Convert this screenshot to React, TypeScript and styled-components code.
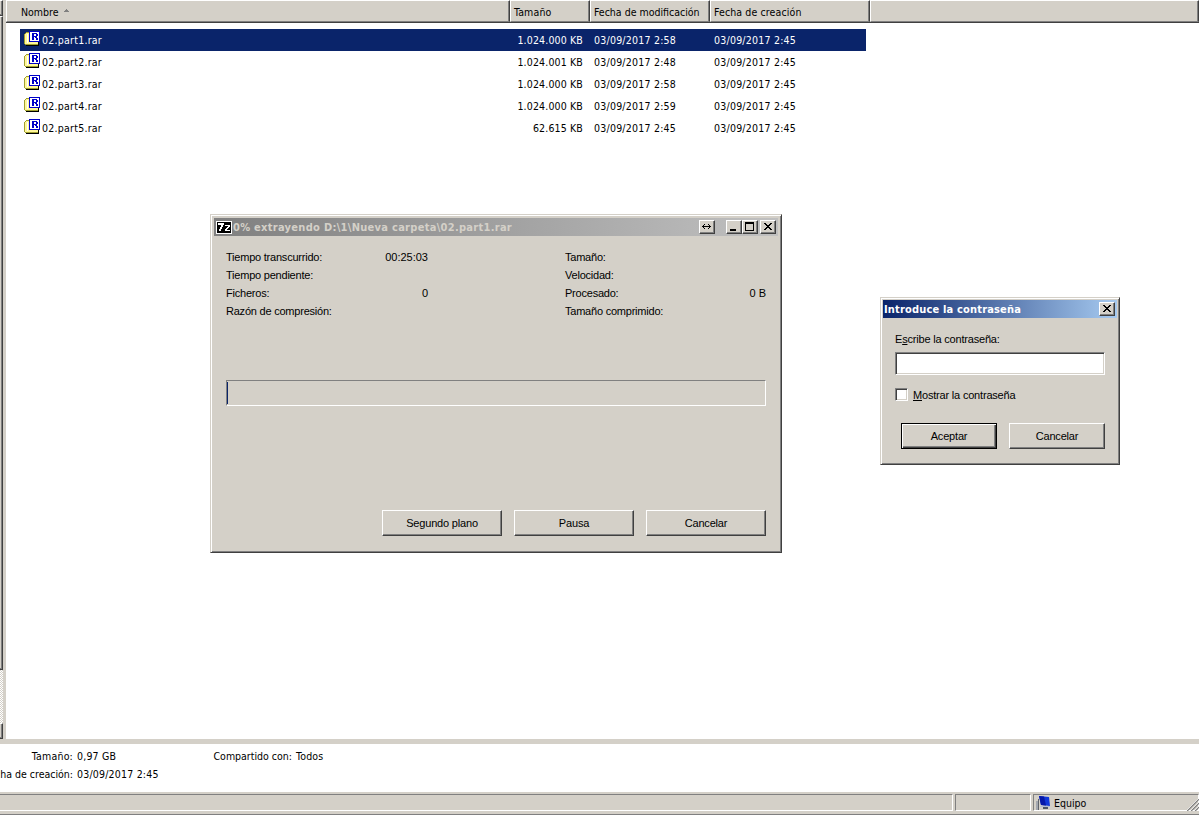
import React from 'react';
import styled, { createGlobalStyle, css } from 'styled-components';

const face = '#d4d0c8';
const tahoma = "'DejaVu Sans Condensed', 'DejaVu Sans', sans-serif";
const msSans = "'Liberation Sans', Arial, sans-serif";

const Global = createGlobalStyle`
  * { box-sizing: border-box; }
  body { margin: 0; background: #fff; }
  button, input { font: inherit; color: inherit; padding: 0; margin: 0; border-radius: 0; appearance: none; outline: none; }
`;

const Screen = styled.div`
  width: 1199px; height: 815px; overflow: hidden; position: relative;
  display: flex; flex-direction: column; background: #fff; color: #000;
  font: 10.5px/14px ${tahoma}; white-space: pre; cursor: default;
`;
const Explorer = styled.div`display: flex; height: 739px; flex: none;`;
const TreeEdge = styled.div`
  width: 6px; flex: none; display: flex; flex-direction: column; background: ${face};
`;
const ScrollPiece = styled.div<{ $h: number }>`
  width: 3px; height: ${p => p.$h}px; flex: none;
  border-top: 1px solid #fff; border-right: 1px solid #404040; border-bottom: 1px solid #404040;
  box-shadow: inset -1px -1px #808080;
`;
const ScrollTrack = styled.div`
  width: 3px; flex: 1; background: repeating-conic-gradient(#fff 0 25%, ${face} 0 50%) 0 0 / 2px 2px;
`;
const List = styled.div`flex: 1; min-width: 0;`;
const Header = styled.div`
  height: 23px; display: flex; background: ${face};
  border-bottom: 1px solid #404040; margin-bottom: 6px;
`;
const HeaderCell = styled.div<{ $w?: number; $pad?: number; $ls?: number }>`
  ${p => (p.$w ? css`width: ${p.$w}px;` : css`flex: 1;`)}
  display: flex; align-items: center; gap: 5px; padding: 1px 0 0 ${p => p.$pad ?? 3}px;
  letter-spacing: ${p => p.$ls ?? 0}px;
  border-top: 1px solid #fff; border-left: 1px solid #fff; border-right: 1px solid #404040; border-bottom: 1px solid #808080;
  box-shadow: inset -1px 0 #808080;
`;
const SortArrow = styled.svg`display: block; margin-top: -3px;`;
const Row = styled.div<{ $sel?: boolean }>`
  width: 846px; height: 22px; margin-left: 14px; padding: 0 0 1px 4px; display: flex; align-items: center;
  background: ${p => (p.$sel ? '#0a246a' : 'transparent')}; color: ${p => (p.$sel ? '#fff' : '#000')};
`;
const FileName = styled.div`display: flex; align-items: center; gap: 2px; width: 466px; letter-spacing: 0.25px;`;
const FileIcon = styled.svg`display: block; margin-top: -1px;`;
const Size = styled.div`width: 93px; text-align: right; letter-spacing: 0.15px;`;
const DateCell = styled.div`width: 120px; padding-left: 11px; flex: none; letter-spacing: 0.23px;`;

const Divider = styled.div`height: 5px; flex: none; background: ${face};`;
const Details = styled.div`
  height: 48px; flex: none; padding-top: 3px; display: grid; line-height: 18px; align-content: start;
  grid-template-columns: 73px 136px 83px 100px; grid-auto-rows: 18px;
`;
const Key = styled.div<{ $ls?: number }>`display: flex; justify-content: flex-end; letter-spacing: ${p => p.$ls ?? 0}px;`;
const Val = styled.div`padding-left: 4px; letter-spacing: 0.2px;`;

const StatusBar = styled.div`
  height: 23px; flex: none; display: flex; gap: 2px; background: ${face}; padding: 2px 0 3px; border-bottom: 1px solid #808080;
`;
const StatusPane = styled.div<{ $w?: number; $open?: boolean }>`
  ${p => (p.$w ? css`width: ${p.$w}px;` : css`flex: 1;`)}
  display: flex; align-items: center; gap: 2px; padding: 1px 0 0 2px; position: relative;
  border: 1px solid; border-color: #808080 #fff #fff #808080;
  ${p => p.$open && css`border-left: 0;`}
`;
const Grip = styled.svg`position: absolute; right: -1px; bottom: -1px;`;

const Window = styled.section<{ $x: number; $y: number; $w: number; $h: number; $frame: number }>`
  position: absolute; left: ${p => p.$x}px; top: ${p => p.$y}px; width: ${p => p.$w}px; height: ${p => p.$h}px;
  padding: ${p => p.$frame - 1}px; background: ${face};
  border: 1px solid; border-color: ${face} #404040 #404040 ${face};
  box-shadow: inset 1px 1px #fff, inset -1px -1px #808080;
  font: 11px/18px ${msSans};
`;
const TitleBar = styled.header<{ $active?: boolean }>`
  height: 18px; display: flex; align-items: center; padding: 0 2px 0 ${p => (p.$active ? 1 : 2)}px;
  font: bold 11px/18px ${tahoma};
  background: ${p => (p.$active ? 'linear-gradient(90deg, #0a246a, #a6caf0)' : 'linear-gradient(90deg, #808080, #c0c0c0)')};
  color: ${p => (p.$active ? '#fff' : face)};
`;
const Title = styled.span<{ $ls: number }>`flex: 1; padding-top: 1px; letter-spacing: ${p => p.$ls}px;`;
const CaptionButton = styled.button<{ $gap?: number }>`
  width: 16px; height: 14px; margin-left: ${p => p.$gap ?? 0}px; background: ${face};
  border: 1px solid; border-color: #fff #404040 #404040 #fff; box-shadow: inset -1px -1px #808080;
  & > svg { display: block; }
`;
const Stats = styled.div`display: flex; padding: 12px 12px 0; height: 144px;`;
const StatColumn = styled.dl<{ $w: number; $gap?: number }>`margin: 0 ${p => p.$gap ?? 0}px 0 0; width: ${p => p.$w}px;`;
const Stat = styled.div`display: flex; justify-content: space-between; height: 18px; & > dd { margin: 0; }`;
const Term = styled.dt`letter-spacing: -0.22px;`;
const Progress = styled.div`
  height: 26px; margin: 0 12px; padding: 1px 0; border: 1px solid; border-color: #808080 #fff #fff #808080;
`;
const ProgressFill = styled.div`width: 1px; height: 22px; background: #0a246a;`;
const Buttons = styled.div<{ $top: number; $right: number }>`
  display: flex; justify-content: flex-end; gap: 12px; padding-right: ${p => p.$right}px; margin-top: ${p => p.$top}px;
`;
const Button = styled.button<{ $w: number; $default?: boolean }>`
  && { width: ${p => p.$w}px; height: 26px; padding-bottom: 1px; background: ${face}; letter-spacing: -0.18px; line-height: 18px;
  border: 1px solid; border-color: #fff #404040 #404040 #fff; box-shadow: inset -1px -1px #808080;
  ${p => p.$default && css`border-color: #000; box-shadow: inset 1px 1px #fff, inset -1px -1px #404040, inset -2px -2px #808080;`} }
`;
const Form = styled.div`padding: 12px 12px 0; letter-spacing: -0.19px;`;
const Label = styled.label`display: block; height: 22px;`;
const Input = styled.input`
  && { display: block; width: 210px; height: 23px; background: #fff;
  border: 1px solid; border-color: #808080 #fff #fff #808080; box-shadow: inset 1px 1px #404040, inset -1px -1px ${face}; }
`;
const CheckRow = styled.label`display: flex; align-items: center; gap: 5px; margin-top: 11px; height: 18px;`;
const Check = styled.span`
  width: 13px; height: 13px; margin-top: -1px; background: #fff; border: 1px solid; border-color: #808080 #fff #fff #808080;
  box-shadow: inset 1px 1px #404040, inset -1px -1px ${face};
`;

const RarIcon = () => (
  <FileIcon width="16" height="16" viewBox="0 0 16 16" shapeRendering="crispEdges">
    <path d="M2 2h4v1h9v10H1V3h1z" fill="#fff799" />
    <path d="M0 3h1v10H0zM1 2h1v1H1zM2 1h3v1H2zM1 13h13v1H1z" fill="#a0a030" />
    <path d="M2 14h13v1H2zM14 10h1v4h-1z" fill="#000" />
    <path d="M3 3h1v9H3z" fill="#fff" />
    <path d="M5 0h11v11H5z" fill="#0000c8" />
    <path d="M6 1h9v9H6z" fill="#fff" />
    <path d="M8 2h5v1H8zM8 3h2v6H8zM12 3h2v2h-2zM10 5h3v1h-3zM11 6h2v1h-2zM12 7h2v2h-2z" fill="#0000c8" />
  </FileIcon>
);

const files = [
  ['02.part1.rar', '1.024.000 KB', '03/09/2017 2:58'],
  ['02.part2.rar', '1.024.001 KB', '03/09/2017 2:48'],
  ['02.part3.rar', '1.024.000 KB', '03/09/2017 2:58'],
  ['02.part4.rar', '1.024.000 KB', '03/09/2017 2:59'],
  ['02.part5.rar', '62.615 KB', '03/09/2017 2:45'],
];

const Glyph = ({ d }: { d: string }) => (
  <svg width="14" height="12" viewBox="0 0 14 12" shapeRendering="crispEdges"><path d={d} fill="#000" /></svg>
);
const closeGlyph = 'M3 2h2v1H3zM9 2h2v1H9zM4 3h2v1H4zM8 3h2v1H8zM5 4h4v1H5zM6 5h2v1H6zM5 6h4v1H5zM4 7h2v1H4zM8 7h2v1H8zM3 8h2v1H3zM9 8h2v1H9z';

export default function App() {
  return (
    <Screen>
      <Global />
      <Explorer>
        <TreeEdge>
          <ScrollPiece $h={16} />
          <ScrollPiece $h={654} />
          <ScrollTrack />
          <ScrollPiece $h={16} />
        </TreeEdge>
        <List>
          <Header>
            <HeaderCell $w={504} $pad={14}>
              Nombre
              <SortArrow width="5" height="3" viewBox="0 0 5 3" shapeRendering="crispEdges"><path d="M2 0h1v1H2zM1 1h3v1H1zM0 2h5v1H0z" fill="#808080" /></SortArrow>
            </HeaderCell>
            <HeaderCell $w={80} $ls={0.15}>Tamaño</HeaderCell>
            <HeaderCell $w={120}>Fecha de modificación</HeaderCell>
            <HeaderCell $w={160} $ls={0.12}>Fecha de creación</HeaderCell>
            <HeaderCell />
          </Header>
          {files.map(([name, size, date], i) => (
            <Row key={name} $sel={i === 0}>
              <FileName><RarIcon />{name}</FileName>
              <Size>{size}</Size>
              <DateCell>{date}</DateCell>
              <DateCell>03/09/2017 2:45</DateCell>
            </Row>
          ))}
        </List>
      </Explorer>
      <Divider />
      <Details>
        <Key $ls={0.2}>Tamaño:</Key><Val>0,97 GB</Val><Key>Compartido con:</Key><Val>Todos</Val>
        <Key>Fecha de creación:</Key><Val>03/09/2017 2:45</Val>
      </Details>
      <StatusBar>
        <StatusPane $w={953} $open />
        <StatusPane $w={76} />
        <StatusPane>
          <svg width="16" height="16" viewBox="0 0 16 16">
            <path d="M0 6h2v9H0z" fill="#a4a8b0" /><path d="M2 4h1v11H2z" fill="#60646c" />
            <path d="M3 1l10 1 1 9-9-1z" fill="#1238d8" /><path d="M3 1l5 .5 2 9-5-.5z" fill="#0718a8" />
            <path d="M4 11h10v1H4z" fill="#b8c0d0" /><path d="M7 12h5v2H7z" fill="#505868" />
          </svg>
          Equipo
          <Grip width="12" height="12" viewBox="0 0 12 12"><path d="M0 12L12 0M4 12l8-8M8 12l4-4" stroke="#808080" strokeWidth="1.5" /><path d="M-1 12L12 -1M3 12l9-9M7 12l5-5" stroke="#fff" strokeWidth=".7" /></Grip>
        </StatusPane>
      </StatusBar>

      <Window $x={210} $y={214} $w={572} $h={339} $frame={4}>
        <TitleBar>
          <svg width="17" height="16" viewBox="0 0 17 16" shapeRendering="crispEdges">
            <path d="M0 2h16v13H0z" fill="#fff" /><path d="M1 3h14v11H1z" />
            <path d="M2 4h6v2H7v2H6v2H5v2H3v-2h1V8h1V6H2zM9 6h5v2h-1v1h-1v1h-1v1h3v1H9v-2h1V9h1V8h1V7H9z" fill="#fff" />
          </svg>
          <Title $ls={0.29}>0% extrayendo D:\1\Nueva carpeta\02.part1.rar</Title>
          <CaptionButton><Glyph d="M2 5h9v1H2zM3 4h1v3H3zM4 3h1v1H4zM4 7h1v1H4zM9 4h1v3H9zM8 3h1v1H8zM8 7h1v1H8z" /></CaptionButton>
          <CaptionButton $gap={11}><Glyph d="M3 8h6v2H3z" /></CaptionButton>
          <CaptionButton><Glyph d="M2 1h9v9H2zM3 3v6h7V3z" /></CaptionButton>
          <CaptionButton $gap={2}><Glyph d={closeGlyph} /></CaptionButton>
        </TitleBar>
        <Stats>
          <StatColumn $w={202} $gap={137}>
            <Stat><Term>Tiempo transcurrido:</Term><dd>00:25:03</dd></Stat>
            <Stat><Term>Tiempo pendiente:</Term></Stat>
            <Stat><Term>Ficheros:</Term><dd>0</dd></Stat>
            <Stat><Term>Razón de compresión:</Term></Stat>
          </StatColumn>
          <StatColumn $w={201}>
            <Stat><Term>Tamaño:</Term></Stat>
            <Stat><Term>Velocidad:</Term></Stat>
            <Stat><Term>Procesado:</Term><dd>0 B</dd></Stat>
            <Stat><Term>Tamaño comprimido:</Term></Stat>
          </StatColumn>
        </Stats>
        <Progress><ProgressFill /></Progress>
        <Buttons $top={104} $right={12}>
          <Button $w={120}>Segundo plano</Button>
          <Button $w={120}>Pausa</Button>
          <Button $w={120}>Cancelar</Button>
        </Buttons>
      </Window>

      <Window $x={880} $y={297} $w={240} $h={168} $frame={3}>
        <TitleBar $active>
          <Title $ls={0.17}>Introduce la contraseña</Title>
          <CaptionButton><Glyph d={closeGlyph} /></CaptionButton>
        </TitleBar>
        <Form>
          <Label>E<u>s</u>cribe la contraseña:</Label>
          <Input />
          <CheckRow><Check /><span><u>M</u>ostrar la contraseña</span></CheckRow>
        </Form>
        <Buttons $top={19} $right={12}>
          <Button $w={96} $default>Aceptar</Button>
          <Button $w={96}>Cancelar</Button>
        </Buttons>
      </Window>
    </Screen>
  );
}
